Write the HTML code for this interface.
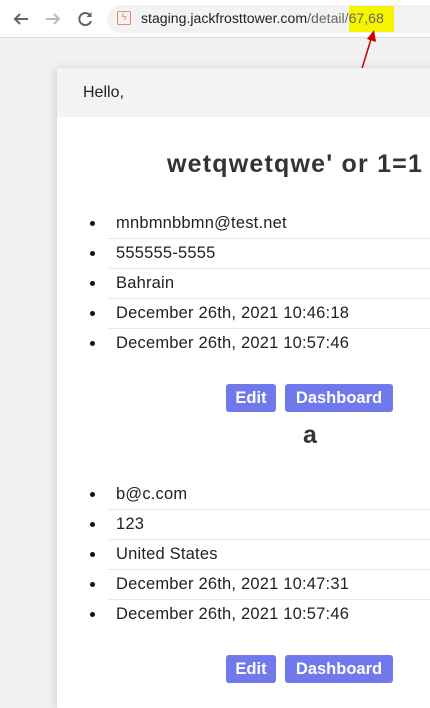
<!DOCTYPE html>
<html><head><style>
body{margin:0;width:430px;height:695px;overflow:hidden;background:#f1f1f1;font-family:"Liberation Sans",sans-serif;position:relative;color:#222}
.bar{position:absolute;left:0;top:0;width:430px;height:37px;background:#fff;border-bottom:1px solid #dadce0}
.url{position:absolute;left:107px;top:5px;width:340px;height:28px;background:#f1f3f4;border-radius:14px}
.card{position:absolute;left:57px;top:68px;width:400px;height:640px;background:#fff;box-shadow:-2px 0 8px rgba(0,0,0,.12)}
.hd{height:49px;background:#f3f3f3;font-size:16px;line-height:49px;padding-left:26px;color:#222}
.t{position:absolute;font-size:16.5px;letter-spacing:.2px}
.dot{position:absolute;width:5px;height:5px;border-radius:50%;background:#111}
.ln{position:absolute;left:51px;width:360px;height:1px;background:#e9e9e9}
.btn{position:absolute;height:28px;background:#7079ec;color:#fff;font-weight:bold;font-size:16.5px;line-height:28px;text-align:center;border-radius:3px}
h2{position:absolute;margin:0;font-size:25px;letter-spacing:1.2px;font-weight:bold;color:#333;white-space:nowrap}
</style></head><body>
<div class="bar">
<svg style="position:absolute;left:12px;top:10px" width="18" height="18" viewBox="0 0 18 18"><path d="M16 9H3M8 4L3 9l5 5" stroke="#5f6368" stroke-width="2" fill="none"/></svg>
<svg style="position:absolute;left:44px;top:10px" width="18" height="18" viewBox="0 0 18 18"><path d="M2 9h13M10 4l5 5-5 5" stroke="#bbb" stroke-width="2" fill="none"/></svg>
<svg style="position:absolute;left:76px;top:10px" width="18" height="18" viewBox="0 0 18 18"><path d="M14.5 6A6 6 0 1 0 15 11" stroke="#5f6368" stroke-width="2" fill="none"/><path d="M15.5 2v5h-5z" fill="#5f6368"/></svg>
<div class="url"></div>
<div style="position:absolute;left:117px;top:11px;width:14px;height:14px;border:1.5px solid #f08a5d;border-radius:2px;box-sizing:border-box;color:#f08a5d;font-size:10px;line-height:11px;text-align:center">ϟ</div>
<div style="position:absolute;left:349px;top:6px;width:45px;height:26px;background:#f5f500"></div>
<div style="position:absolute;left:141px;top:10px;font-size:14.1px;color:#222">staging.jackfrosttower.com<span style="color:#666">/detail/67,68</span></div>
</div>
<svg style="position:absolute;left:350px;top:28px" width="30" height="62"><path d="M6 60L22 8" stroke="#c00" stroke-width="1.5"/><path d="M24 2l2 12-9-3z" fill="#c00"/></svg>
<div class="card">
<div class="hd">Hello,</div>
<h2 style="left:110px;top:82px">wetqwetqwe' or 1=1</h2>
<div class="dot" style="left:33px;top:153px"></div><div class="t" style="left:59px;top:146px">mnbmnbbmn@test.net</div><div class="ln" style="top:170px"></div>
<div class="dot" style="left:33px;top:183px"></div><div class="t" style="left:59px;top:176px">555555-5555</div><div class="ln" style="top:200px"></div>
<div class="dot" style="left:33px;top:213px"></div><div class="t" style="left:59px;top:206px">Bahrain</div><div class="ln" style="top:230px"></div>
<div class="dot" style="left:33px;top:243px"></div><div class="t" style="left:59px;top:236px">December 26th, 2021 10:46:18</div><div class="ln" style="top:260px"></div>
<div class="dot" style="left:33px;top:273px"></div><div class="t" style="left:59px;top:266px">December 26th, 2021 10:57:46</div>
<div class="btn" style="left:169px;top:316px;width:50px">Edit</div>
<div class="btn" style="left:228px;top:316px;width:108px">Dashboard</div>
<h2 style="left:246px;top:353px">a</h2>
<div class="dot" style="left:33px;top:424px"></div><div class="t" style="left:59px;top:417px">b@c.com</div><div class="ln" style="top:441px"></div>
<div class="dot" style="left:33px;top:454px"></div><div class="t" style="left:59px;top:447px">123</div><div class="ln" style="top:471px"></div>
<div class="dot" style="left:33px;top:484px"></div><div class="t" style="left:59px;top:477px">United States</div><div class="ln" style="top:501px"></div>
<div class="dot" style="left:33px;top:514px"></div><div class="t" style="left:59px;top:507px">December 26th, 2021 10:47:31</div><div class="ln" style="top:531px"></div>
<div class="dot" style="left:33px;top:544px"></div><div class="t" style="left:59px;top:537px">December 26th, 2021 10:57:46</div>
<div class="btn" style="left:169px;top:587px;width:50px">Edit</div>
<div class="btn" style="left:228px;top:587px;width:108px">Dashboard</div>
</div>
</body></html>
